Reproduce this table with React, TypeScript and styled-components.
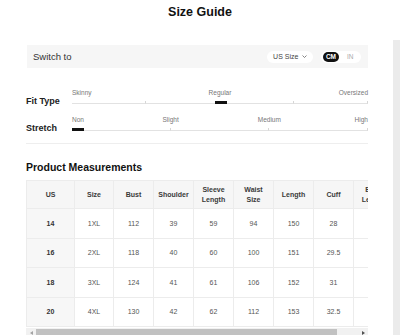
import React from "react";
import styled, { createGlobalStyle } from "styled-components";

const Global = createGlobalStyle`
  html, body { margin: 0; padding: 0; background: #fff; }
  body {
    font-family: "Liberation Sans", Arial, sans-serif;
    width: 400px;
    height: 335px;
    overflow: hidden;
  }
`;

const Page = styled.div`
  display: flex;
  flex-direction: column;
  width: 400px;
  height: 335px;
`;

const Title = styled.h1`
  margin: 0;
  height: 24px;
  line-height: 24px;
  text-align: center;
  font-size: 12.5px;
  font-weight: 700;
  color: #111;
`;

const Body = styled.div`
  flex: 1;
  display: flex;
  min-height: 0;
`;

const Main = styled.div`
  flex: 1;
  min-width: 0;
  padding: 21px 25px 0 26px;
`;

const Rail = styled.div`
  width: 7px;
  padding-top: 16px;
  display: flex;
`;

const RailThumb = styled.div`
  flex: 1;
  background: #ebebeb;
`;

const SwitchBar = styled.div`
  margin-left: 1px;
  height: 23px;
  display: flex;
  align-items: center;
  padding: 0 7px 0 6px;
  background: #f6f6f6;
`;

const SwitchLabel = styled.span`
  flex: 1;
  font-size: 9.5px;
  color: #333;
`;

const SizeSelect = styled.div`
  height: 12px;
  display: flex;
  align-items: center;
  gap: 4px;
  padding: 0 6px 0 6px;
  border-radius: 6px;
  background: #fff;
  font-size: 7px;
  color: #444;
`;

const UnitToggle = styled.div`
  margin-left: 8px;
  display: flex;
  align-items: center;
  gap: 6px;
  padding: 1px 5px 1px 2px;
  border-radius: 6px;
  background: #fff;
`;

const UnitButton = styled.span<{ $active?: boolean }>`
  height: 10px;
  line-height: 10px;
  padding: 0 2.5px;
  border-radius: 5px;
  background: ${(p) => (p.$active ? "#111" : "transparent")};
  color: ${(p) => (p.$active ? "#fff" : "#aaa")};
  font-size: 6.5px;
  font-weight: ${(p) => (p.$active ? 700 : 400)};
`;

const Sliders = styled.div`
  margin-top: 20px;
  padding-bottom: 12px;
  border-bottom: 1px solid #eee;
  display: flex;
  flex-direction: column;
  gap: 11px;
`;

const SliderRow = styled.div`
  display: grid;
  grid-template-columns: 46px 1fr;
  grid-template-rows: 9px 7px;
`;

const RowLabel = styled.div`
  grid-column: 1;
  grid-row: 2;
  align-self: end;
  font-size: 9px;
  font-weight: 700;
  line-height: 11px;
  margin-bottom: -3px;
  color: #222;
`;

const ScaleLabels = styled.div<{ $cols: number }>`
  grid-column: 2;
  grid-row: 1;
  display: grid;
  grid-template-columns: repeat(${(p) => p.$cols}, 1fr);
  font-size: 6.5px;
  line-height: 9px;
  color: #777;
`;

const ScaleLabel = styled.span<{ $from: number; $to: number; $align: string }>`
  grid-column: ${(p) => p.$from} / ${(p) => p.$to};
  justify-self: ${(p) => p.$align};
  white-space: nowrap;
`;

const Track = styled.div`
  grid-column: 2;
  grid-row: 2;
  position: relative;
  display: flex;
  align-items: flex-end;
`;

const TrackSeg = styled.div`
  flex: 1;
  height: 2px;
  border-bottom: 1px solid #e2e2e2;
  border-right: 1px solid #d6d6d6;
  &:last-child {
    border-right: none;
  }
`;

const Marker = styled.div`
  position: absolute;
  bottom: 0;
  width: 12px;
  height: 3px;
  background: #111;
`;

const Heading = styled.h2`
  margin: 16px 0 6px;
  font-size: 10.5px;
  font-weight: 700;
  line-height: 14px;
  color: #111;
`;

const TableWrap = styled.div`
  overflow: hidden;
  width: 100%;
`;

const Table = styled.table`
  border-collapse: collapse;
  table-layout: fixed;
  width: 367px;
`;

const Th = styled.th`
  height: 27px;
  padding: 0 3.5px;
  background: #f6f6f6;
  border: 1px solid #ececec;
  font-size: 7px;
  font-weight: 700;
  line-height: 10px;
  color: #3a3a3a;
  text-align: center;
  vertical-align: middle;
`;

const Td = styled.td`
  height: 28.5px;
  padding: 0;
  border: 1px solid #ececec;
  font-size: 7px;
  color: #555;
  text-align: center;
  vertical-align: middle;
  background: #fff;
  &:first-child {
    background: #f7f7f7;
    color: #333;
    font-weight: 700;
  }
`;

const HScroll = styled.div`
  margin-top: 1px;
  height: 9px;
  display: flex;
  background: #f1f1f1;
`;

const ScrollArrow = styled.div<{ $dark?: boolean }>`
  width: 10px;
  display: flex;
  align-items: center;
  justify-content: center;
  color: ${(p) => (p.$dark ? "#505050" : "#a3a3a3")};
`;

const ScrollTrack = styled.div`
  flex: 1;
  padding: 1px 0;
  display: flex;
`;

const ScrollThumb = styled.div`
  background: #c1c1c1;
`;

type Scale = { name: string; intervals: number; labels: [number, string][]; value: number };

const scales: Scale[] = [
  { name: "Fit Type", intervals: 4, labels: [[0, "Skinny"], [2, "Regular"], [4, "Oversized"]], value: 2 },
  { name: "Stretch", intervals: 3, labels: [[0, "Non"], [1, "Slight"], [2, "Medium"], [3, "High"]], value: 0 },
];

const headers = ["US", "Size", "Bust", "Shoulder", "Sleeve Length", "Waist Size", "Length", "Cuff", "Back Length"];
const widths = [48, 39, 40, 40, 40, 40, 40, 40, 40];

const rows = [
  ["14", "1XL", "112", "39", "59", "94", "150", "28", ""],
  ["16", "2XL", "118", "40", "60", "100", "151", "29.5", "-"],
  ["18", "3XL", "124", "41", "61", "106", "152", "31", "-"],
  ["20", "4XL", "130", "42", "62", "112", "153", "32.5", "-"],
];

function ScaleRow({ scale }: { scale: Scale }) {
  const n = scale.intervals;
  const pct = (scale.value / n) * 100;
  const left = scale.value === 0 ? "0px" : scale.value === n ? "calc(100% - 12px)" : `calc(${pct}% - 5px)`;
  return (
    <SliderRow>
      <RowLabel>{scale.name}</RowLabel>
      <ScaleLabels $cols={2 * n}>
        {scale.labels.map(([p, text]) => {
          if (p === 0) return <ScaleLabel key={text} $from={1} $to={2} $align="start">{text}</ScaleLabel>;
          if (p === n) return <ScaleLabel key={text} $from={2 * n} $to={2 * n + 1} $align="end">{text}</ScaleLabel>;
          return <ScaleLabel key={text} $from={2 * p} $to={2 * p + 2} $align="center">{text}</ScaleLabel>;
        })}
      </ScaleLabels>
      <Track>
        {Array.from({ length: n }).map((_, i) => (
          <TrackSeg key={i} />
        ))}
        <Marker style={{ left }} />
      </Track>
    </SliderRow>
  );
}

export default function App() {
  return (
    <>
      <Global />
      <Page>
        <Title>Size Guide</Title>
        <Body>
          <Main>
            <SwitchBar>
              <SwitchLabel>Switch to</SwitchLabel>
              <SizeSelect>
                US Size
                <svg width="5" height="3" viewBox="0 0 5 3">
                  <path d="M0.5 0.5 L2.5 2.5 L4.5 0.5" fill="none" stroke="#666" strokeWidth="0.8" />
                </svg>
              </SizeSelect>
              <UnitToggle>
                <UnitButton $active>CM</UnitButton>
                <UnitButton>IN</UnitButton>
              </UnitToggle>
            </SwitchBar>
            <Sliders>
              {scales.map((s) => (
                <ScaleRow key={s.name} scale={s} />
              ))}
            </Sliders>
            <Heading>Product Measurements</Heading>
            <TableWrap>
              <Table>
                <colgroup>
                  {widths.map((w, i) => (
                    <col key={i} style={{ width: w }} />
                  ))}
                </colgroup>
                <thead>
                  <tr>
                    {headers.map((h) => (
                      <Th key={h}>{h}</Th>
                    ))}
                  </tr>
                </thead>
                <tbody>
                  {rows.map((r) => (
                    <tr key={r[0]}>
                      {r.map((c, i) => (
                        <Td key={i}>{c}</Td>
                      ))}
                    </tr>
                  ))}
                </tbody>
              </Table>
            </TableWrap>
            <HScroll>
              <ScrollArrow>
                <svg width="3" height="4" viewBox="0 0 3 4">
                  <path d="M3 0 L0 2 L3 4 Z" fill="currentColor" />
                </svg>
              </ScrollArrow>
              <ScrollTrack>
                <ScrollThumb style={{ width: 301 }} />
              </ScrollTrack>
              <ScrollArrow $dark>
                <svg width="3" height="4" viewBox="0 0 3 4">
                  <path d="M0 0 L3 2 L0 4 Z" fill="currentColor" />
                </svg>
              </ScrollArrow>
            </HScroll>
          </Main>
          <Rail>
            <RailThumb />
          </Rail>
        </Body>
      </Page>
    </>
  );
}
